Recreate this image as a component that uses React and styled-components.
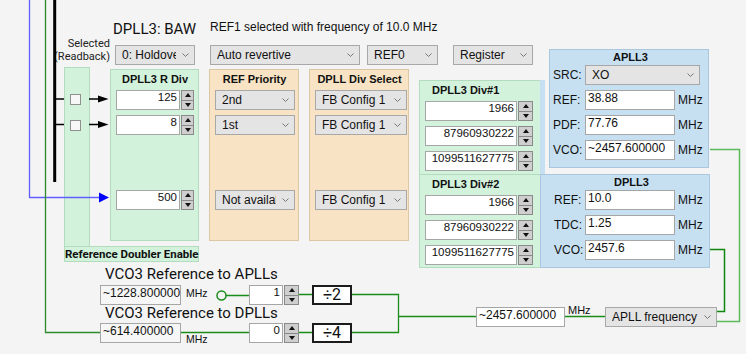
import React from "react";
import styled, { createGlobalStyle } from "styled-components";

const GREEN = "#d3f2dc";
const GREEN_LINE = "#b3dcbf";
const PEACH = "#f8e4c4";
const PEACH_LINE = "#dcc7a4";
const BLUE = "#c7e0f1";
const BLUE_LINE = "#a9c7de";

const GlobalStyle = createGlobalStyle`
  * { box-sizing: border-box; }
  body { margin: 0; background: #f4f4f4; }
`;

const Canvas = styled.div`
  position: relative;
  width: 746px;
  height: 354px;
  overflow: hidden;
  background: #f4f4f4;
  font-family: "Liberation Sans", Arial, sans-serif;
  font-size: 12px;
  color: #111;
`;

// wires of the block diagram, drawn over the panels
const Wires = styled.svg`
  position: absolute;
  left: 0;
  top: 0;
  pointer-events: none;
`;

const Top = styled.div`
  display: flex;
  align-items: flex-start;
`;

const LeftCol = styled.div`
  width: 540px;
  display: flex;
  flex-direction: column;
`;

const Header = styled.div`
  display: flex;
  align-items: flex-start;
  height: 42px;
  padding: 20px 0 0 113px;
`;

const Title = styled.div`
  width: 97px;
  font-family: Roboto, sans-serif;
  font-size: 15px;
  line-height: 18px;
  white-space: nowrap;
`;

const Status = styled.div`
  font-size: 12px;
  line-height: 14px;
  white-space: nowrap;
`;

const Controls = styled.div`
  display: flex;
  align-items: flex-start;
  height: 25px;
  padding-left: 60px;
`;

const Readback = styled.div`
  display: flex;
  flex-direction: column;
  align-items: flex-end;
  width: 50px;
  margin-top: -5px;
  font-family: Roboto, sans-serif;
  font-size: 11px;
  line-height: 13px;
  white-space: nowrap;
  color: #222;
`;

const SelectBox = styled.div`
  display: flex;
  align-items: center;
  flex-shrink: 0;
  width: ${(p) => p.$w}px;
  height: 20px;
  margin-left: ${(p) => p.$ml || 0}px;
  margin-top: ${(p) => p.$mt || 0}px;
  padding: 0 5px 0 6px;
  background: #e4e4e4;
  border: 1px solid #a8a8a8;
  grid-column: ${(p) => p.$span || "auto"};
`;

const SelectText = styled.span`
  flex: 1;
  overflow: hidden;
  white-space: nowrap;
`;

const ChevronIcon = styled.svg`
  flex-shrink: 0;
  margin-left: 6px;
  fill: none;
  stroke: #777;
`;

function Select({ value, w, ml, mt, span }) {
  return (
    <SelectBox $w={w} $ml={ml} $mt={mt} $span={span}>
      <SelectText>{value}</SelectText>
      <ChevronIcon width="7" height="4" viewBox="0 0 7 4">
        <path d="M0.5 0.5 3.5 3.5 6.5 0.5" />
      </ChevronIcon>
    </SelectBox>
  );
}

const Field = styled.div`
  flex-shrink: 0;
  width: ${(p) => p.$w}px;
  height: 20px;
  padding: 0 2px;
  background: ${(p) => (p.$dim ? "#f6f6f6" : "#fff")};
  border: 1px solid #a6a6a6;
  font-size: ${(p) => p.$fs || 12}px;
  text-align: ${(p) => (p.$right ? "right" : "left")};
  white-space: nowrap;
  overflow: hidden;
`;

const SpinWrap = styled.div`
  display: flex;
  margin-top: ${(p) => p.$mt || 0}px;
  margin-left: ${(p) => p.$ml || 0}px;
`;

const Spinner = styled.div`
  width: 15px;
  height: 20px;
  margin-left: 1px;
  display: flex;
  flex-direction: column;
  border: 1px solid #8a8a8a;
  background: #cfcfcf;
`;

const SpinHalf = styled.div`
  flex: 1;
  display: flex;
  align-items: center;
  justify-content: center;
  & + & {
    border-top: 1px solid #8a8a8a;
  }
`;

const Arrow = styled.span`
  width: 0;
  height: 0;
  border-left: 3.5px solid transparent;
  border-right: 3.5px solid transparent;
  ${(p) => (p.$up ? "border-bottom: 4px solid #111;" : "border-top: 4px solid #111;")}
`;

function Spin({ value, w, fs = 11.5, mt, ml }) {
  return (
    <SpinWrap $mt={mt} $ml={ml}>
      <Field $w={w} $fs={fs} $right>
        {value}
      </Field>
      <Spinner>
        <SpinHalf>
          <Arrow $up />
        </SpinHalf>
        <SpinHalf>
          <Arrow />
        </SpinHalf>
      </Spinner>
    </SpinWrap>
  );
}

const MainRow = styled.div`
  display: flex;
  align-items: flex-start;
  padding-left: 64px;
`;

const Doubler = styled.div`
  width: 135px;
  display: flex;
  flex-direction: column;
`;

const DoublerBody = styled.div`
  display: flex;
  height: 179px;
`;

const Strip = styled.div`
  width: 25px;
  display: flex;
  flex-direction: column;
  gap: 15px;
  padding: 26px 0 0 5px;
  background: ${GREEN};
  border-left: 1px solid ${GREEN_LINE};
  border-top: 1px solid ${GREEN_LINE};
`;

const Check = styled.div`
  width: 11px;
  height: 11px;
  background: #f7f7f7;
  border: 1px solid #909090;
`;

const Hole = styled.div`
  flex: 1;
  padding: 2px 0 0 20px;
  border-left: 1px solid ${GREEN_LINE};
`;

const LabelBar = styled.div`
  height: 16px;
  background: ${GREEN};
  border: 1px solid ${GREEN_LINE};
  font-family: Roboto, sans-serif;
  font-weight: 700;
  font-size: 11.5px;
  line-height: 14px;
  text-align: center;
  white-space: nowrap;
`;

const Panel = styled.div`
  display: flex;
  flex-direction: column;
  width: ${(p) => p.$w}px;
  height: ${(p) => p.$h}px;
  margin-left: ${(p) => p.$ml || 0}px;
  margin-top: ${(p) => p.$mt || 0}px;
  padding: 0 4px 0 5px;
  background: ${(p) => p.$bg};
  border: 1px solid ${(p) => p.$line};
`;

const PanelTitle = styled.div`
  height: 20px;
  padding: 3px 0 0 ${(p) => p.$indent || 0}px;
  font-weight: 700;
  font-size: 11px;
  line-height: 12px;
  text-align: ${(p) => (p.$indent ? "left" : "center")};
  white-space: nowrap;
`;

const Stack = styled.div`
  display: flex;
  flex-direction: column;
  gap: 5px;
`;

const DivColumn = styled.div`
  display: flex;
  flex-direction: column;
  width: 121px;
  height: 188px;
  margin: 13px 0 0 10px;
  border: 1px solid ${GREEN_LINE};
  border-right: none;
  background: ${GREEN};
`;

const DivPanel = styled.div`
  height: 93px;
  padding-left: 5px;
  border-top: ${(p) => (p.$divider ? `1px solid ${GREEN_LINE}` : "none")};
`;

const RightCol = styled.div`
  position: relative;
  width: 172px;
  margin-top: 49px;
  display: flex;
  flex-direction: column;
  &::before {
    content: "";
    position: absolute;
    left: 0;
    top: 31px;
    width: 5px;
    height: 94px;
    background: ${BLUE};
  }
`;

const PllPanel = styled.div`
  width: ${(p) => p.$w}px;
  height: ${(p) => p.$h}px;
  margin-left: ${(p) => p.$ml || 0}px;
  margin-top: ${(p) => p.$mt || 0}px;
  padding-left: ${(p) => p.$pl}px;
  background: ${BLUE};
  border: 1px solid ${BLUE_LINE};
`;

const PllTitle = styled.div`
  height: 15px;
  padding-top: 1px;
  font-weight: 700;
  font-size: 11px;
  line-height: 12px;
  text-align: center;
`;

const KV = styled.div`
  display: grid;
  grid-template-columns: ${(p) => p.$label}px 90px auto;
  grid-auto-rows: 20px;
  row-gap: 5px;
  align-items: center;
`;

const Key = styled.span`
  font-size: 12px;
`;

const Mhz = styled.span`
  padding-left: 3px;
  font-size: 12px;
`;

const Bottom = styled.div`
  display: flex;
  align-items: flex-start;
  margin-top: -5px;
  padding-left: 100px;
`;

const BottomLeft = styled.div`
  width: 252px;
  display: flex;
  flex-direction: column;
`;

const VcoLabel = styled.div`
  height: 18px;
  margin-top: ${(p) => p.$mt}px;
  padding-left: 5px;
  font-family: Roboto, sans-serif;
  font-size: 15px;
  line-height: 18px;
  white-space: nowrap;
`;

const Row = styled.div`
  display: flex;
  align-items: flex-start;
  height: 20px;
  margin-top: ${(p) => p.$mt || 0}px;
`;

const Unit = styled.span`
  width: 23px;
  margin-left: ${(p) => p.$ml || 5}px;
  margin-top: ${(p) => p.$mt || 0}px;
  padding-top: ${(p) => p.$pt || 0}px;
  font-size: ${(p) => p.$fs || 10.5}px;
  white-space: nowrap;
`;

const DivideBox = styled.div`
  width: 40px;
  height: 20px;
  margin-left: 13px;
  background: #fff;
  border: 2px solid #1c1c1c;
  font-family: Roboto, sans-serif;
  font-size: 16px;
  line-height: 16px;
  text-align: center;
`;

const BottomRight = styled.div`
  display: flex;
  align-items: flex-start;
  margin: 44px 0 0 124px;
`;

function App() {
  return (
    <Canvas>
      <GlobalStyle />
      <Top>
        <LeftCol>
          <Header>
            <Title>DPLL3: BAW</Title>
            <Status>REF1 selected with frequency of 10.0 MHz</Status>
          </Header>
          <Controls>
            <Readback>
              <span>Selected</span>
              <span>(Readback)</span>
            </Readback>
            <Select value="0: Holdover" w={80} ml={5} mt={3} />
            <Select value="Auto revertive" w={150} ml={15} mt={3} />
            <Select value="REF0" w={71} ml={7} mt={3} />
            <Select value="Register" w={80} ml={15} mt={3} />
          </Controls>
          <MainRow>
            <Doubler>
              <DoublerBody>
                <Strip>
                  <Check />
                  <Check />
                </Strip>
                <Hole>
                  <Panel $w={89} $h={172} $bg={GREEN} $line={GREEN_LINE}>
                    <PanelTitle>DPLL3 R Div</PanelTitle>
                    <Stack>
                      <Spin value="125" w={64} />
                      <Spin value="8" w={64} />
                      <Spin value="500" w={64} mt={50} />
                    </Stack>
                  </Panel>
                </Hole>
              </DoublerBody>
              <LabelBar>Reference Doubler Enable</LabelBar>
            </Doubler>
            <Panel $w={90} $h={172} $ml={10} $mt={2} $bg={PEACH} $line={PEACH_LINE}>
              <PanelTitle>REF Priority</PanelTitle>
              <Stack>
                <Select value="2nd" w={80} />
                <Select value="1st" w={80} />
                <Select value="Not available" w={80} mt={50} />
              </Stack>
            </Panel>
            <Panel $w={100} $h={172} $ml={10} $mt={2} $bg={PEACH} $line={PEACH_LINE}>
              <PanelTitle>DPLL Div Select</PanelTitle>
              <Stack>
                <Select value="FB Config 1" w={92} />
                <Select value="FB Config 1" w={92} />
                <Select value="FB Config 1" w={92} mt={50} />
              </Stack>
            </Panel>
            <DivColumn>
              <DivPanel>
                <PanelTitle $indent={7}>DPLL3 Div#1</PanelTitle>
                <Stack>
                  <Spin value="1966" w={92} />
                  <Spin value="87960930222" w={92} />
                  <Spin value="1099511627775" w={92} />
                </Stack>
              </DivPanel>
              <DivPanel $divider>
                <PanelTitle $indent={7}>DPLL3 Div#2</PanelTitle>
                <Stack>
                  <Spin value="1966" w={92} />
                  <Spin value="87960930222" w={92} />
                  <Spin value="1099511627775" w={92} />
                </Stack>
              </DivPanel>
            </DivColumn>
          </MainRow>
        </LeftCol>
        <RightCol>
          <PllPanel $w={160} $h={119} $ml={9} $pl={3}>
            <PllTitle>APLL3</PllTitle>
            <KV $label={32}>
              <Key>SRC:</Key>
              <Select value="XO" w={115} span="2 / 4" />
              <Key>REF:</Key>
              <Field $w={90}>38.88</Field>
              <Mhz>MHz</Mhz>
              <Key>PDF:</Key>
              <Field $w={90}>77.76</Field>
              <Mhz>MHz</Mhz>
              <Key>VCO:</Key>
              <Field $w={90}>~2457.600000</Field>
              <Mhz>MHz</Mhz>
            </KV>
          </PllPanel>
          <PllPanel $w={170} $h={94} $mt={6} $pl={13}>
            <PllTitle>DPLL3</PllTitle>
            <KV $label={31}>
              <Key>REF:</Key>
              <Field $w={90}>10.0</Field>
              <Mhz>MHz</Mhz>
              <Key>TDC:</Key>
              <Field $w={90}>1.25</Field>
              <Mhz>MHz</Mhz>
              <Key>VCO:</Key>
              <Field $w={90}>2457.6</Field>
              <Mhz>MHz</Mhz>
            </KV>
          </PllPanel>
        </RightCol>
      </Top>
      <Bottom>
        <BottomLeft>
          <VcoLabel $mt={2}>VCO3 Reference to APLLs</VcoLabel>
          <Row $mt={2}>
            <Field $w={81} $dim>~1228.800000</Field>
            <Unit $pt={2}>MHz</Unit>
            <Spin value="1" w={34} ml={40} />
            <DivideBox>÷2</DivideBox>
          </Row>
          <VcoLabel $mt={-1}>VCO3 Reference to DPLLs</VcoLabel>
          <Row $mt={1}>
            <Field $w={81} $dim>~614.400000</Field>
            <Unit $pt={10}>MHz</Unit>
            <Spin value="0" w={34} ml={40} />
            <DivideBox>÷4</DivideBox>
          </Row>
        </BottomLeft>
        <BottomRight>
          <Field $w={89}>~2457.600000</Field>
          <Unit $ml={3} $mt={-3} $fs={11}>MHz</Unit>
          <Select value="APLL frequency" w={112} ml={14} />
        </BottomRight>
      </Bottom>
      <Wires width="746" height="354" viewBox="0 0 746 354" fill="none">
        <path d="M29.5 0V197.5H100" stroke="#5f5fff" strokeWidth="1.3" />
        <polygon points="99,192.5 109,197.5 99,202.5" fill="#0000ff" />
        <path d="M45.5 0V332.5H100" stroke="#2b8a2b" strokeWidth="1.3" />
        <path d="M54.7 0V182" stroke="#000" strokeWidth="3" />
        <path d="M55 99H64M55 124.5H64M89 99H100M89 124.5H100" stroke="#000" strokeWidth="1.3" />
        <polygon points="98,95.5 108.5,99 98,102.5" fill="#000" />
        <polygon points="98,121 108.5,124.5 98,128" fill="#000" />
        <circle cx="221.5" cy="295.5" r="4.5" stroke="#1a8c1a" strokeWidth="1.5" />
        <path
          d="M226 295.5H249M181 332.5H249M299 294.5H312M299 332.5H312M352 294.5H398.5V332.5H352M398.5 316.5H476M565 316.5H605"
          stroke="#1a8c1a"
          strokeWidth="1.3"
        />
        <path d="M710 149.5H739.5V321.5H717" stroke="#5cb85c" strokeWidth="1.5" />
        <path d="M710 249.5H724.5V311.5H717" stroke="#0f870f" strokeWidth="1.5" />
      </Wires>
    </Canvas>
  );
}

export default App;
